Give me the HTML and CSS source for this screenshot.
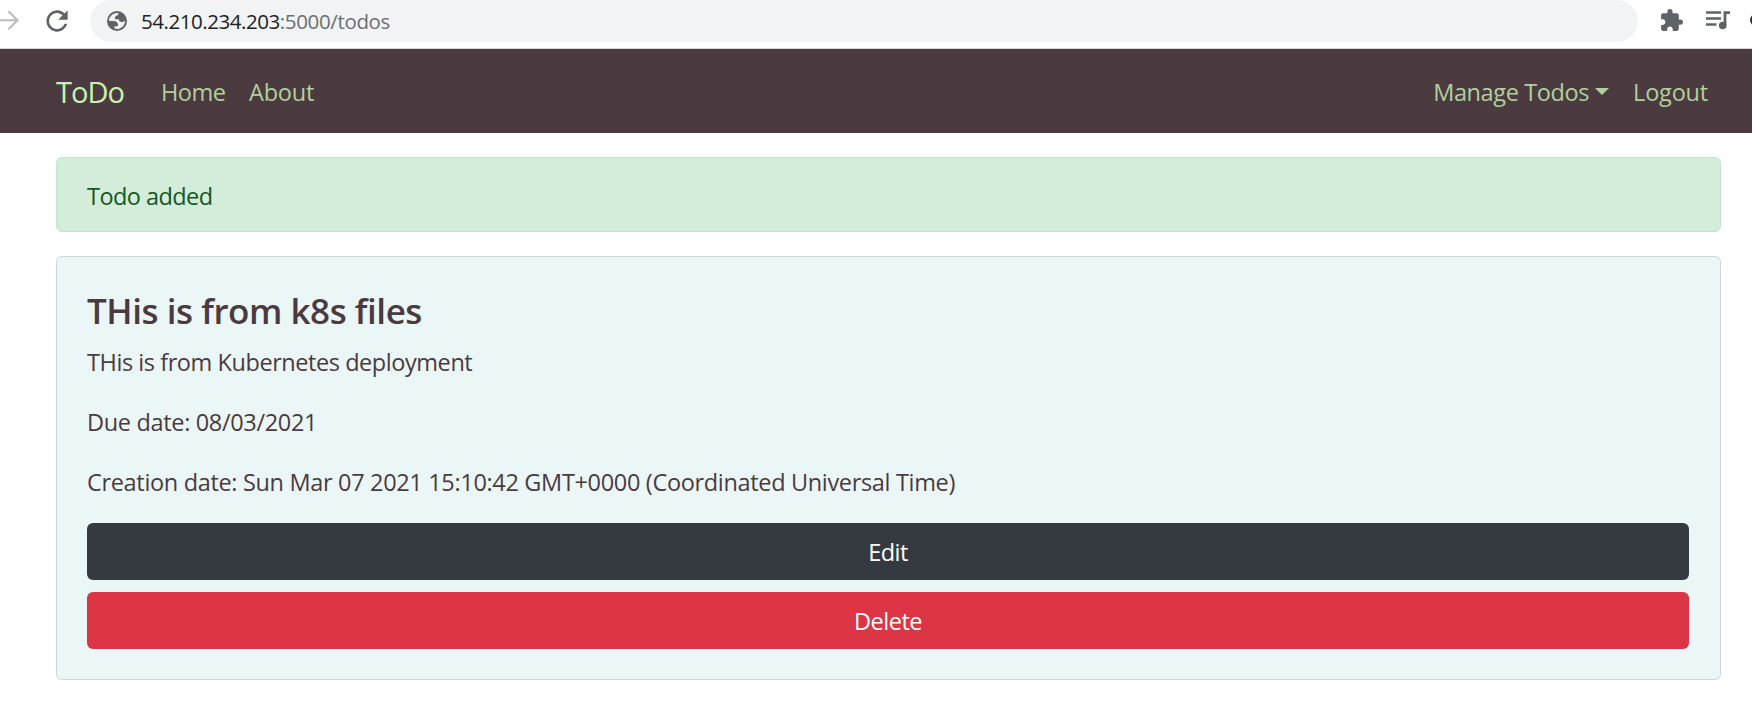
FILE: index.html
```html
<!DOCTYPE html>
<html lang="en">
<head>
<meta charset="utf-8">
<title>ToDo</title>
<link rel="stylesheet" href="styles.css">
</head>
<body>
<div class="toolbar">
  <svg class="forward" width="20" height="24" viewBox="0 0 20 24" fill="none" stroke="#babcbe" stroke-width="2.1"><path d="M0 12.2H17.5M8.5 3.2L17.5 12.2L8.5 21.2"/></svg>
  <svg class="reload" width="32" height="32" viewBox="0 0 24 24" fill="#5f6368"><path d="M17.65 6.35A7.96 7.96 0 0 0 12 4a8 8 0 1 0 7.73 10h-2.08A6 6 0 1 1 12 6c1.66 0 3.14.69 4.22 1.78L13 11h7V4z"/></svg>
  <div class="address">
    <svg class="globe" width="20" height="20" viewBox="2 2 20 20"><circle cx="12" cy="12" r="10" fill="#5f6368"/><path fill="#f1f3f4" d="M4 12h4.400c3.407.022 4.922 1.730 4.543 5.127H9.488v2.470A8.004 8.004 0 0 0 19.986 11.514C19.327 12.504 18.332 13 17 13c-2.137 0-3.206-.916-3.206-2.750h-3.748c-.274-2.728.683-4.092 2.870-4.092 0-.975.327-1.597.811-1.970A8.004 8.004 0 0 0 4 12z"/></svg>
    <span class="host">54.210.234.203</span><span class="path">:5000/todos</span>
  </div>
  <svg class="puzzle" width="25" height="25" viewBox="0 0 24 24" fill="#5f6368"><path d="M20.500 11H19V7c0-1.100-.9-2-2-2h-4V3.500a2.500 2.500 0 0 0-5 0V5H4c-1.100 0-1.990.9-1.990 2v3.800H3.500c1.490 0 2.700 1.210 2.700 2.700s-1.210 2.700-2.700 2.700H2V20c0 1.100.9 2 2 2h3.800v-1.500c0-1.490 1.210-2.700 2.700-2.700s2.700 1.210 2.700 2.700V22H17c1.100 0 2-.9 2-2v-4h1.500a2.500 2.500 0 0 0 0-5z"/></svg>
  <svg class="media" width="24" height="20" viewBox="0 0 24 20" fill="none" stroke="#5f6368"><path stroke-width="2.300" d="M0 2.500h15M0 8.500h15M0 14.500h10.500"/><path stroke-width="2.800" d="M19 15V2.700h5"/><circle cx="16.700" cy="15.500" r="3.800" fill="#5f6368" stroke="none"/></svg>
  <i class="avatar"></i>
</div>
<nav class="navbar">
  <a class="brand">ToDo</a>
  <a class="link home">Home</a>
  <a class="link about">About</a>
  <a class="link manage">Manage Todos</a><i class="caret"></i>
  <a class="link logout">Logout</a>
</nav>
<main class="content">
  <div class="alert"><span class="added">Todo added</span></div>
  <section class="card">
    <h3 class="title">THis is from k8s files</h3>
    <p class="body">THis is from Kubernetes deployment</p>
    <p class="due">Due date: 08/03/2021</p>
    <p class="created">Creation date: Sun Mar 07 2021 15:10:42 GMT+0000 (Coordinated Universal Time)</p>
    <button class="btn edit">Edit</button>
    <button class="btn delete">Delete</button>
  </section>
</main>
</body>
</html>
```
FILE: styles.css
```css
* { box-sizing: border-box; }
body { margin: 0; background: #fff; color: #4b3a40; font: 23.5px/36px "Open Sans", sans-serif; overflow: hidden; white-space: nowrap; }
svg { display: block; flex: none; }
.toolbar { display: flex; height: 49px; border-bottom: 1px solid #d5d8db; }
.forward { margin-top: 8px; }
.reload { margin: 5px 0 0 21px; }
.address { display: flex; width: 1548px; height: 42px; margin-left: 17px; padding-left: 17px; border-radius: 21px; background: #f1f3f4; font-size: 20.5px; line-height: 42px; flex: none; }
.globe { width: 20px; height: 20px; margin: 11px 14px 0 0; }
.host { color: #202124; letter-spacing: -0.45px; }
.path { color: #6b6f73; letter-spacing: -0.35px; }
.puzzle { margin: 8px 0 0 21px; }
.media { margin: 10px 0 0 22px; }
.avatar { width: 12px; height: 12px; margin: 14px 0 0 20px; border-radius: 6px; background: #30342d; flex: none; }
.navbar { display: flex; align-items: center; height: 84px; padding: 2px 44px 0 56px; background: #4b3a40; }
.brand { width: 105px; margin-top: -2px; color: #c9f2b0; font-size: 29px; line-height: 45px; letter-spacing: -1px; }
.link { color: #b0d09c; }
.home { width: 88px; letter-spacing: -0.5px; }
.about { letter-spacing: -0.2px; }
.manage { margin-left: auto; letter-spacing: -0.38px; }
.caret { margin: -2px 24px 0 6px; border: 7px solid transparent; border-top-color: #b0d09c; border-bottom: 0; }
.logout { letter-spacing: -0.2px; }
.content { padding: 24px 31px 0 56px; }
.alert { height: 75px; padding: 20px 30px; border: 1px solid #c3e6cb; border-radius: 6px; background: #d4edda; color: #155724; }
.added { letter-spacing: -0.55px; }
.card { height: 424px; margin-top: 24px; padding: 32px 31px 30px 30px; border: 1px solid #cbd8da; border-radius: 6px; background: #ebf7f7; }
.title { margin: 0 0 11px; font-size: 35px; line-height: 44px; font-weight: 600; letter-spacing: -0.46px; }
p { margin: 0 0 24px; letter-spacing: -0.33px; }
.body { letter-spacing: -0.44px; }
.created { margin-bottom: 23px; }
.btn { display: block; width: 100%; height: 57px; margin: 0 0 12px; padding: 1px 0 0; border: 0; border-radius: 6px; color: #fff; font: inherit; letter-spacing: -0.5px; }
.edit { background: #343a40; }
.delete { background: #dc3545; }
```
